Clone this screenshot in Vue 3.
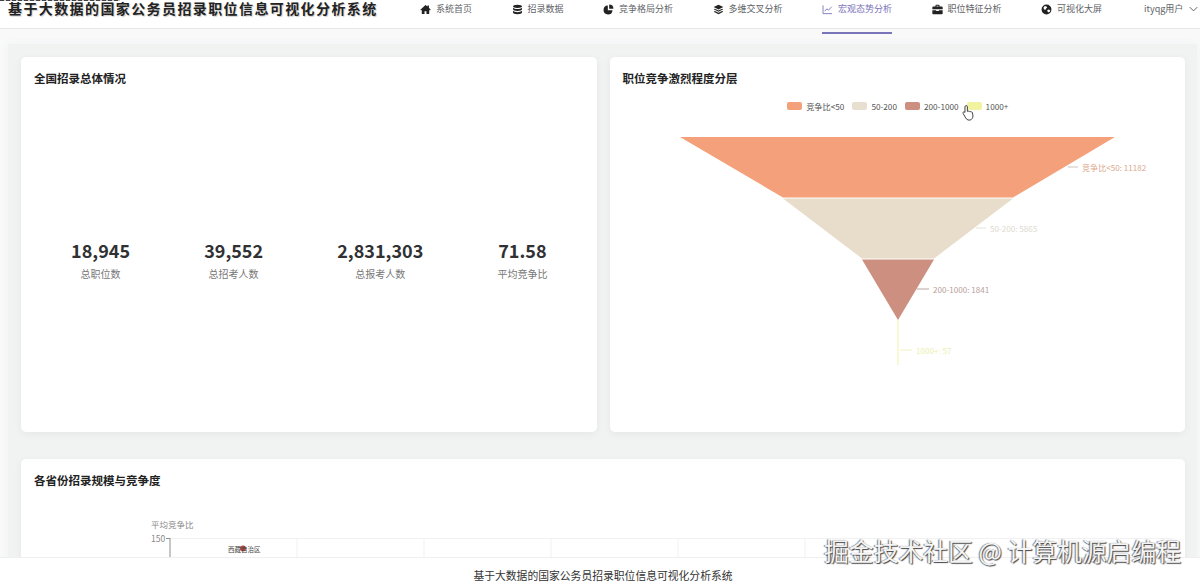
<script setup>
const navItems = [
  { label: '系统首页', icon: 'home' },
  { label: '招录数据', icon: 'database' },
  { label: '竞争格局分析', icon: 'pie' },
  { label: '多维交叉分析', icon: 'layers' },
  { label: '宏观态势分析', icon: 'line', active: true },
  { label: '职位特征分析', icon: 'briefcase' },
  { label: '可视化大屏', icon: 'globe' },
]

const stats = [
  { value: '18,945', label: '总职位数' },
  { value: '39,552', label: '总招考人数' },
  { value: '2,831,303', label: '总报考人数' },
  { value: '71.58', label: '平均竞争比' },
]

const legend = [
  { label: '竞争比<50', color: '#f4a07a' },
  { label: '50-200', color: '#e8dfd0' },
  { label: '200-1000', color: '#cc8f80' },
  { label: '1000+', color: '#f1f3a0' },
]

const gridLines = [297, 424, 551, 678, 805, 932, 1059]
</script>

<template>
  <div class="page">
    <header class="topbar">
      <div class="clipped-line"></div>
      <h1 class="brand">基于大数据的国家公务员招录职位信息可视化分析系统</h1>
      <nav class="nav">
        <a v-for="item in navItems" :key="item.label" class="nav-item" :class="{ active: item.active }">
          <svg class="nav-icon" viewBox="0 0 16 16">
            <path v-if="item.icon === 'home'" d="M8 1.500 0.500 8.200l1 1.100L2.600 8.400V14.500h4V10.500h2.800v4h4V8.400l1.100.9 1-1.100L13 5.600V2.200h-2v1.600z" />
            <g v-else-if="item.icon === 'database'">
              <ellipse cx="8" cy="3.400" rx="6.500" ry="2.400" />
              <path d="M1.500 5.400v2.200C1.500 9 4.400 10 8 10s6.500-1 6.500-2.400V5.400C13.400 6.800 10.800 7.400 8 7.400S2.600 6.800 1.500 5.400z" />
              <path d="M1.500 9.900v2.500C1.500 13.800 4.400 14.800 8 14.800s6.500-1 6.500-2.400V9.900C13.400 11.300 10.800 11.900 8 11.900S2.600 11.300 1.500 9.900z" />
            </g>
            <g v-else-if="item.icon === 'pie'">
              <path d="M7 2.200A6.500 6.500 0 1 0 13.800 9H7z" />
              <path d="M9 0.800V7h6.200A6.300 6.300 0 0 0 9 .8z" />
            </g>
            <g v-else-if="item.icon === 'layers'">
              <path d="M8 1 1 4.500 8 8l7-3.500z" />
              <path d="M2.800 6.800 1 7.800 8 11.300l7-3.500-1.800-1L8 9.400z" />
              <path d="M2.800 10.200 1 11.200 8 14.800l7-3.600-1.800-1L8 12.800z" />
            </g>
            <path v-else-if="item.icon === 'line'" class="stroke" d="M1.500 2v12h13M4 10.500l3-3.500 2.500 2L14 4" />
            <g v-else-if="item.icon === 'briefcase'">
              <path d="M5 3.500V2.200C5 1.500 5.500 1 6.200 1h3.600c.7 0 1.200.5 1.200 1.200v1.300h3c.8 0 1.500.7 1.500 1.500v2.700H.5V5C.5 4.200 1.200 3.500 2 3.500zM6.500 2.500v1h3v-1z" fill-rule="evenodd" />
              <path d="M.5 9h5.500v1.300h4V9h5.500v4.300c0 .8-.7 1.500-1.500 1.500H2c-.8 0-1.500-.7-1.500-1.500z" />
            </g>
            <path v-else d="M8 .8a7.200 7.200 0 1 0 0 14.400A7.200 7.200 0 0 0 8 .8zM3.500 5.500l2-2.500 2.500.5 1 1.500-1.500 1.500-1 2-2-.5zm7.500 7-1.500-1.500-.5-2 2-1 2.500 1-.5 2z" fill-rule="evenodd" />
          </svg>
          <span>{{ item.label }}</span>
        </a>
      </nav>
      <div class="user">
        <span>ityqg用户</span>
        <svg class="chevron" viewBox="0 0 12 8"><path d="M1 1.500 6 6.500l5-5" /></svg>
      </div>
    </header>

    <main class="content">
      <div class="row">
        <section class="card half">
          <h2 class="card-title">全国招录总体情况</h2>
          <div class="stats">
            <div v-for="s in stats" :key="s.label" class="stat">
              <div class="stat-value">{{ s.value }}</div>
              <div class="stat-label">{{ s.label }}</div>
            </div>
          </div>
        </section>

        <section class="card half">
          <h2 class="card-title">职位竞争激烈程度分层</h2>
          <div class="legend">
            <div v-for="l in legend" :key="l.label" class="legend-item">
              <i class="swatch" :style="{ background: l.color }"></i>
              <span>{{ l.label }}</span>
            </div>
          </div>
          <svg class="funnel" viewBox="623 112 550 262">
            <polygon points="680,137 1115,137 1013,197.500 783,197.500" fill="#f4a07a" />
            <polygon points="783,198.500 1013,198.500 934,258.500 862,258.500" fill="#e8dccb" />
            <polygon points="862,259.500 934,259.500 898,320" fill="#cc8f80" />
            <line x1="898" y1="320" x2="898" y2="365" stroke="#f1f3a8" />

            <line x1="1068" y1="167" x2="1078" y2="167" stroke="#c9c3bd" />
            <text x="1082" y="170.500" fill="#dca98f">竞争比&lt;50: 11182</text>
            <line x1="976" y1="228" x2="986" y2="228" stroke="#e8e2d8" />
            <text x="990" y="231.500" fill="#dedad2">50-200: 5865</text>
            <line x1="917" y1="289" x2="929" y2="289" stroke="#b9a7a3" />
            <text x="933" y="292.500" fill="#b8a09b">200-1000: 1841</text>
            <line x1="900" y1="350" x2="912" y2="350" stroke="#f0f2c0" />
            <text x="916" y="353.500" fill="#ecefb0">1000+: 57</text>
          </svg>
          <svg class="cursor" viewBox="0 0 14 18">
            <path d="M4.500 1.500c.8 0 1.300.6 1.300 1.300v5l.6-.1c.5-.3 1.300-.2 1.600.3.500-.3 1.300-.2 1.600.4.600-.3 1.400 0 1.600.7l.6 3.500c0 2-1 4-3 4.500H6.500C5 16.500 4.200 15.500 3.500 14L1.200 10c-.4-.7-.1-1.400.5-1.600.5-.2 1 0 1.500.5V2.800c0-.7.500-1.300 1.300-1.300z" />
          </svg>
        </section>
      </div>

      <section class="card wide">
        <h2 class="card-title">各省份招录规模与竞争度</h2>
        <svg class="province-chart" viewBox="34 488 1139 100">
          <text x="151" y="527.500" fill="#8a8a8a">平均竞争比</text>
          <text x="151" y="541.500" fill="#8a8a8a">150</text>
          <line x1="167" y1="538.500" x2="1173" y2="538.500" stroke="#f1f1f1" />
          <line x1="170" y1="538" x2="170" y2="588" stroke="#8f8f8f" />
          <line x1="166" y1="538.500" x2="170" y2="538.500" stroke="#8f8f8f" />
          <line v-for="x in gridLines" :key="x" :x1="x" y1="538" :x2="x" y2="588" stroke="#f1f1f1" />
          <circle cx="243" cy="548.500" r="3" fill="#b5483f" />
          <text x="228" y="551.500" class="bubble-label" fill="#444">西藏自治区</text>
        </svg>
      </section>
    </main>

    <footer class="footer">基于大数据的国家公务员招录职位信息可视化分析系统</footer>
    <div class="watermark">掘金技术社区 @ 计算机源启编程</div>
  </div>
</template>

<style scoped>
.page {
  position: relative;
  height: 583px;
  overflow: hidden;
  background: #f9f9fa;
  font-family: "Noto Sans CJK SC", "Noto Sans", sans-serif;
  color: #303133;
}

.topbar {
  position: relative;
  display: flex;
  height: 28px;
  padding-left: 8px;
  background: #fff;
  border-bottom: 1px solid #e6e6e6;
}

.clipped-line {
  position: absolute;
  top: 0;
  left: 0;
  width: 120px;
  height: 1px;
  background: repeating-linear-gradient(90deg, #444 0 4px, #ccc 4px 6px);
}

.brand {
  width: 370px;
  margin: 0;
  padding-top: 1px;
  font-family: "Liberation Serif", "Noto Sans CJK SC", serif;
  font-size: 14px;
  font-weight: 700;
  line-height: 18px;
  letter-spacing: 1.4px;
  white-space: nowrap;
  color: #222;
  text-shadow: 1px 1px 1px rgba(0, 0, 0, 0.2);
}

.nav {
  display: flex;
  gap: 39.5px;
  margin-left: 42px;
}

.nav-item {
  display: flex;
  align-items: flex-start;
  gap: 5px;
  height: 29px;
  padding-top: 3px;
  font-size: 9px;
  line-height: 12px;
  color: #606266;
  white-space: nowrap;
}

.nav-item.active {
  color: #7a74b8;
  border-bottom: 2px solid #7a74b8;
}

.nav-icon {
  width: 11px;
  height: 11px;
  margin-top: 1px;
  fill: #222;
}

.nav-item.active .nav-icon {
  fill: none;
}

.stroke {
  fill: none;
  stroke: #7a74b8;
  stroke-width: 1.300;
}

.user {
  display: flex;
  align-items: flex-start;
  gap: 6px;
  margin-left: 42px;
  padding-top: 3px;
  font-size: 9px;
  line-height: 12px;
  color: #606266;
  white-space: nowrap;
}

.chevron {
  width: 9px;
  height: 6px;
  margin-top: 3px;
  fill: none;
  stroke: #555;
  stroke-width: 1.200;
}

.content {
  display: flex;
  flex-direction: column;
  gap: 27px;
  margin: 15px 3px 0 8px;
  padding: 13px 12px 13px 13px;
  background: #f1f2f2;
  box-shadow: 0 0 8px #f1f2f2;
}

.row {
  display: flex;
  gap: 13px;
}

.card {
  position: relative;
  box-sizing: border-box;
  padding: 13px 12px 13px 13px;
  background: #fff;
  border-radius: 5px;
  box-shadow: 0 2px 8px rgba(0, 0, 0, 0.05);
}

.half {
  flex: 1;
  height: 375px;
}

.wide {
  height: 340px;
}

.card-title {
  margin: 0;
  font-size: 11.500px;
  font-weight: 700;
  line-height: 16px;
  color: #222;
}

.stats {
  display: flex;
  justify-content: space-around;
  margin-top: 150px;
  text-align: center;
}

.stat-value {
  font-size: 18px;
  font-weight: 700;
  line-height: 28px;
  color: #303133;
}

.stat-label {
  margin-top: 3px;
  font-size: 10px;
  line-height: 14px;
  color: #777;
}

.legend {
  display: flex;
  justify-content: center;
  gap: 8px;
  margin-top: 14px;
  font-size: 8.200px;
  line-height: 12px;
  color: #555;
}

.legend-item {
  display: flex;
  align-items: center;
  gap: 4px;
}

.swatch {
  display: block;
  width: 15px;
  height: 8px;
  border-radius: 2px;
}

.funnel {
  display: block;
  width: 550px;
  height: 262px;
  font-size: 8.100px;
}

.cursor {
  position: absolute;
  top: 47px;
  left: 352px;
  width: 13px;
  height: 17px;
  fill: #fff;
  stroke: #333;
  stroke-width: 1;
}

.province-chart {
  display: block;
  width: 1139px;
  height: 100px;
  font-size: 8.500px;
}

.bubble-label {
  font-size: 6.500px;
}

.footer {
  position: absolute;
  right: 0;
  bottom: 0;
  left: 0;
  height: 26px;
  padding-left: 6px;
  box-sizing: border-box;
  background: #fff;
  border-top: 1px solid #efefef;
  font-family: "Liberation Serif", "Noto Sans CJK SC", serif;
  font-size: 10.800px;
  line-height: 36px;
  text-align: center;
  color: #333;
}

.watermark {
  position: absolute;
  right: 19px;
  top: 534px;
  font-size: 24.800px;
  line-height: 32px;
  white-space: nowrap;
  color: #f4f4f4;
  text-shadow: 1px 1px 1px #444, -1px 0 1px #777;
}
</style>
